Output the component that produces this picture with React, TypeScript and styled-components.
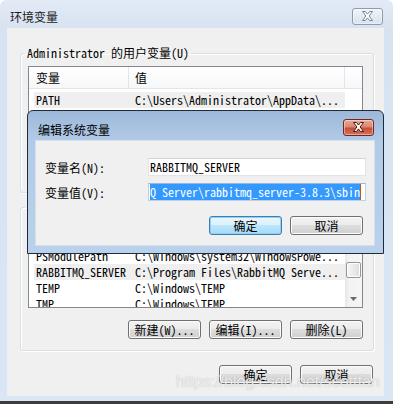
import React, {FC} from 'react';
import styled, {createGlobalStyle} from 'styled-components';

const UI_FONT = '"Noto Sans Mono CJK SC", "Liberation Mono", "Noto Sans CJK SC", monospace';
const TITLE_FONT = '"Noto Sans CJK SC", "Liberation Sans", sans-serif';

const GlobalStyle = createGlobalStyle`
    html, body {
        margin: 0;
        padding: 0;
        background: #fff;
    }
    body {
        font-family: ${UI_FONT};
        font-size: 12px;
        color: #000;
    }
    * {
        box-sizing: border-box;
    }
`;

interface EnvVar {
    name: string;
    value: string;
    selected?: boolean;
}

const userVars: EnvVar[] = [
    {name: 'PATH', value: 'C:\\Users\\Administrator\\AppData\\...', selected: true},
    {name: 'TEMP', value: '%USERPROFILE%\\AppData\\Local\\Temp'},
    {name: 'TMP', value: '%USERPROFILE%\\AppData\\Local\\Temp'},
];

const systemVars: EnvVar[] = [
    {name: 'PROCESSOR_REVISION', value: '3c03'},
    {name: 'PSModulePath', value: 'C:\\Windows\\system32\\WindowsPowe...'},
    {name: 'RABBITMQ_SERVER', value: 'C:\\Program Files\\RabbitMQ Serve...', selected: true},
    {name: 'TEMP', value: 'C:\\Windows\\TEMP'},
    {name: 'TMP', value: 'C:\\Windows\\TEMP'},
    {name: 'USERNAME', value: 'SYSTEM'},
    {name: 'windir', value: 'C:\\Windows'},
];

const Window = styled.div`
    position: relative;
    width: 393px;
    height: 404px;
    display: flex;
    flex-direction: column;
    padding: 0 9px 5px 7px;
    background: linear-gradient(to bottom, #e2eaf6 0, #d8e3f1 28px, #dbe6f4 100%);
    border-bottom: 3px solid #3c3c3c;
    border-radius: 6px 6px 0 0;
    overflow: hidden;
`;

const TitleBar = styled.div`
    height: 28px;
    flex: none;
    display: flex;
    align-items: center;
    justify-content: space-between;
    padding: 4px 1px 0 3px;
`;

const TitleText = styled.span`
    font-family: ${TITLE_FONT};
    font-size: 12px;
    color: #1b1b1b;
`;

const CloseButton = styled.div<{$active?: boolean}>`
    width: 31px;
    height: 17px;
    display: flex;
    align-items: center;
    justify-content: center;
    border-radius: 3px;
    border: 1px solid ${(p) => (p.$active ? '#6e2a20' : '#8e9cae')};
    background: ${(p) => (p.$active
        ? 'linear-gradient(#e9aa9a 0%, #da8670 45%, #c5503a 55%, #d4705a 100%)'
        : 'linear-gradient(#f1f5fa 0%, #e4ebf4 50%, #d8e2ee 100%)')};
    box-shadow: inset 0 0 0 1px rgba(255, 255, 255, 0.4);
`;

const CloseGlyph: FC<{outline: string}> = ({outline}) => (
    <svg width='13' height='10' viewBox='0 0 13 10'>
        <path
            d='M1.5 0.5h3l2 2.6 2-2.6h3l-3.4 4.5 3.4 4.5h-3l-2-2.6-2 2.6h-3l3.4-4.5z'
            fill='#fff'
            stroke={outline}
            strokeWidth='1'
            strokeLinejoin='round'
        />
    </svg>
);

const Client = styled.div`
    flex: 1;
    background: #f0f0f0;
    padding: 18px 10px 0 13px;
    display: flex;
    flex-direction: column;
`;

const GroupBox = styled.fieldset`
    margin: 0;
    padding: 6px 10px 11px 7px;
    min-width: 0;
    border: 1px solid #d5dfe5;
    border-radius: 3px;
    box-shadow: inset 1px 1px 0 #fff, 1px 1px 0 #fff;

    & + & {
        margin-top: 7px;
    }
`;

const Legend = styled.legend`
    padding: 0 2px;
    margin-left: -3px;
    line-height: 14px;
    font-size: 12px;
`;

const ListView = styled.div<{$height: number}>`
    height: ${(p) => p.$height}px;
    border: 1px solid #828790;
    background: #fff;
    display: flex;
    overflow: hidden;
`;

const ListMain = styled.div`
    flex: 1;
    min-width: 0;
    display: flex;
    flex-direction: column;
    overflow: hidden;
`;

const Header = styled.div`
    height: 22px;
    flex: none;
    display: grid;
    grid-template-columns: 95px 216px 1fr;
    padding-left: 5px;
    background: linear-gradient(#ffffff, #f6f7f9);
    border-bottom: 1px solid #e5e5e5;
`;

const HeaderCell = styled.div<{$pad: number}>`
    padding-left: ${(p) => p.$pad}px;
    line-height: 21px;
    border-right: 1px solid #e3e5e8;
    white-space: nowrap;
    overflow: hidden;
`;

const Rows = styled.div<{$offset: number}>`
    padding-top: 3px;
    margin-top: -${(p) => p.$offset}px;
`;

const Row = styled.div`
    height: 16px;
    display: grid;
    grid-template-columns: 95px 216px;
    padding-left: 5px;
`;

const Cell = styled.div<{$pad: number; $selected?: boolean}>`
    padding-left: ${(p) => p.$pad}px;
    line-height: 16px;
    white-space: nowrap;
    overflow: hidden;
    background: ${(p) => (p.$selected ? '#efefef' : 'transparent')};
`;

const ScrollBar = styled.div`
    width: 17px;
    flex: none;
    display: flex;
    flex-direction: column;
    background: linear-gradient(to right, #e6e6e6, #f3f3f3 4px, #f5f5f5);
`;

const ArrowBox = styled.div`
    height: 17px;
    flex: none;
    display: flex;
    align-items: center;
    justify-content: center;
`;

const Thumb = styled.div`
    height: 16px;
    margin: 24px 1px 0;
    border: 1px solid #979797;
    border-radius: 2px;
    background: linear-gradient(to right, #f7f7f7, #e8e8e8 60%, #dcdcdc);
    box-shadow: inset 0 0 0 1px #fdfdfd;
`;

const Spacer = styled.div`
    flex: 1;
`;

const ButtonRow = styled.div<{$top: number; $right?: number}>`
    display: flex;
    justify-content: flex-end;
    gap: 8px;
    margin-top: ${(p) => p.$top}px;
    margin-right: ${(p) => p.$right || 0}px;
`;

const Button = styled.div<{$default?: boolean}>`
    width: 73px;
    height: 19px;
    display: flex;
    align-items: center;
    justify-content: center;
    white-space: nowrap;
    font-size: 12px;
    color: #000;
    border: 1px solid ${(p) => (p.$default ? '#3c7fb1' : '#707070')};
    border-radius: 3px;
    background: ${(p) => (p.$default
        ? 'linear-gradient(#eaf6fd 0%, #d9f0fc 50%, #bee6fd 50%, #a7d9f5 100%)'
        : 'linear-gradient(#f2f2f2 0%, #ebebeb 50%, #dddddd 50%, #cfcfcf 100%)')};
    box-shadow: inset 0 0 0 1px ${(p) => (p.$default ? '#8fd0f4' : '#fcfcfc')};
`;

const Dialog = styled.div`
    position: absolute;
    left: 27px;
    top: 110px;
    width: 357px;
    height: 144px;
    display: flex;
    flex-direction: column;
    border: 1px solid #1f2b38;
    border-radius: 6px 6px 0 0;
    background: linear-gradient(to bottom, #9cb8d9 0, #b2cae6 29px, #b9d1ea 100%);
`;

const DialogTitle = styled.div`
    height: 29px;
    flex: none;
    display: flex;
    align-items: center;
    justify-content: space-between;
    padding: 3px 9px 0 10px;
`;

const DialogTitleText = styled(TitleText)`
    padding-top: 4px;
    color: #000;
`;

const DialogBody = styled.div`
    flex: 1;
    margin: 0 8px 7px 7px;
    background: #f0f0f0;
    border: 1px solid #d3e0ee;
    padding: 17px 8px 10px 9px;
`;

const FieldRow = styled.div`
    display: grid;
    grid-template-columns: 103px 1fr;
    align-items: center;

    & + & {
        margin-top: 7px;
    }
`;

const TextBox = styled.div<{$focused?: boolean}>`
    height: 18px;
    padding: 0 1px;
    background: #fff;
    border: 1px solid ${(p) => (p.$focused ? '#bdd0e6' : '#e2e4e8')};
    border-top-color: ${(p) => (p.$focused ? '#9cb6d4' : '#d2d4d8')};
    line-height: 16px;
    white-space: nowrap;
    overflow: hidden;
`;

const Selection = styled.span`
    background: #3399ff;
    color: #fff;
    border-right: 1px solid #c05a10;
`;

const Watermark = styled.div`
    position: absolute;
    left: 176px;
    top: 373px;
    font-family: "Liberation Sans", Arial, sans-serif;
    font-size: 16px;
    line-height: 18px;
    color: rgba(255, 255, 255, 0.78);
    text-shadow: 0 0 1px rgba(110, 110, 110, 0.55);
    pointer-events: none;
    white-space: nowrap;
`;

const ArrowUp: FC = () => (
    <svg width='7' height='4' viewBox='0 0 7 4'>
        <polygon points='0,4 7,4 3.5,0' fill='#6a6a6a' />
    </svg>
);

const ArrowDown: FC = () => (
    <svg width='7' height='4' viewBox='0 0 7 4'>
        <polygon points='0,0 7,0 3.5,4' fill='#6a6a6a' />
    </svg>
);

interface VarListProps {
    vars: EnvVar[];
    height: number;
    scrollbar?: boolean;
    offset?: number;
}

const VarList: FC<VarListProps> = ({vars, height, scrollbar, offset = 0}) => (
    <ListView $height={height}>
        <ListMain>
            <Header>
                <HeaderCell $pad={2}>{'变量'}</HeaderCell>
                <HeaderCell $pad={6}>{'值'}</HeaderCell>
                <div />
            </Header>
            <Rows $offset={offset}>
                {vars.map((v) => (
                    <Row key={v.name}>
                        <Cell $pad={2} $selected={v.selected}>{v.name}</Cell>
                        <Cell $pad={6} $selected={v.selected}>{v.value}</Cell>
                    </Row>
                ))}
            </Rows>
        </ListMain>
        {scrollbar && (
            <ScrollBar>
                <ArrowBox><ArrowUp /></ArrowBox>
                <Thumb />
                <Spacer />
                <ArrowBox><ArrowDown /></ArrowBox>
            </ScrollBar>
        )}
    </ListView>
);

const VarButtons: FC<{top: number}> = ({top}) => (
    <ButtonRow $top={top}>
        <Button>{'新建(W)...'}</Button>
        <Button>{'编辑(I)...'}</Button>
        <Button>{'删除(L)'}</Button>
    </ButtonRow>
);

const App: FC = () => (
    <>
        <GlobalStyle />
        <Window>
            <TitleBar>
                <TitleText>{'环境变量'}</TitleText>
                <CloseButton><CloseGlyph outline='#7d8794' /></CloseButton>
            </TitleBar>
            <Client>
                <GroupBox>
                    <Legend>{'Administrator 的用户变量(U)'}</Legend>
                    <VarList vars={userVars} height={84} />
                    <VarButtons top={12} />
                </GroupBox>
                <GroupBox>
                    <Legend>{'系统变量(S)'}</Legend>
                    <VarList vars={systemVars} height={88} scrollbar offset={14} />
                    <VarButtons top={12} />
                </GroupBox>
                <ButtonRow $top={14} $right={1}>
                    <Button>{'确定'}</Button>
                    <Button>{'取消'}</Button>
                </ButtonRow>
            </Client>

            <Dialog>
                <DialogTitle>
                    <DialogTitleText>{'编辑系统变量'}</DialogTitleText>
                    <CloseButton $active><CloseGlyph outline='#4a1a12' /></CloseButton>
                </DialogTitle>
                <DialogBody>
                    <FieldRow>
                        <span>{'变量名(N):'}</span>
                        <TextBox>{'RABBITMQ_SERVER'}</TextBox>
                    </FieldRow>
                    <FieldRow>
                        <span>{'变量值(V):'}</span>
                        <TextBox $focused>
                            <Selection>{'Q Server\\rabbitmq_server-3.8.3\\sbin'}</Selection>
                        </TextBox>
                    </FieldRow>
                    <ButtonRow $top={15} $right={3}>
                        <Button $default>{'确定'}</Button>
                        <Button>{'取消'}</Button>
                    </ButtonRow>
                </DialogBody>
            </Dialog>

            <Watermark>{'https://blog.csdn.net/scottfan'}</Watermark>
        </Window>
    </>
);

export default App;
